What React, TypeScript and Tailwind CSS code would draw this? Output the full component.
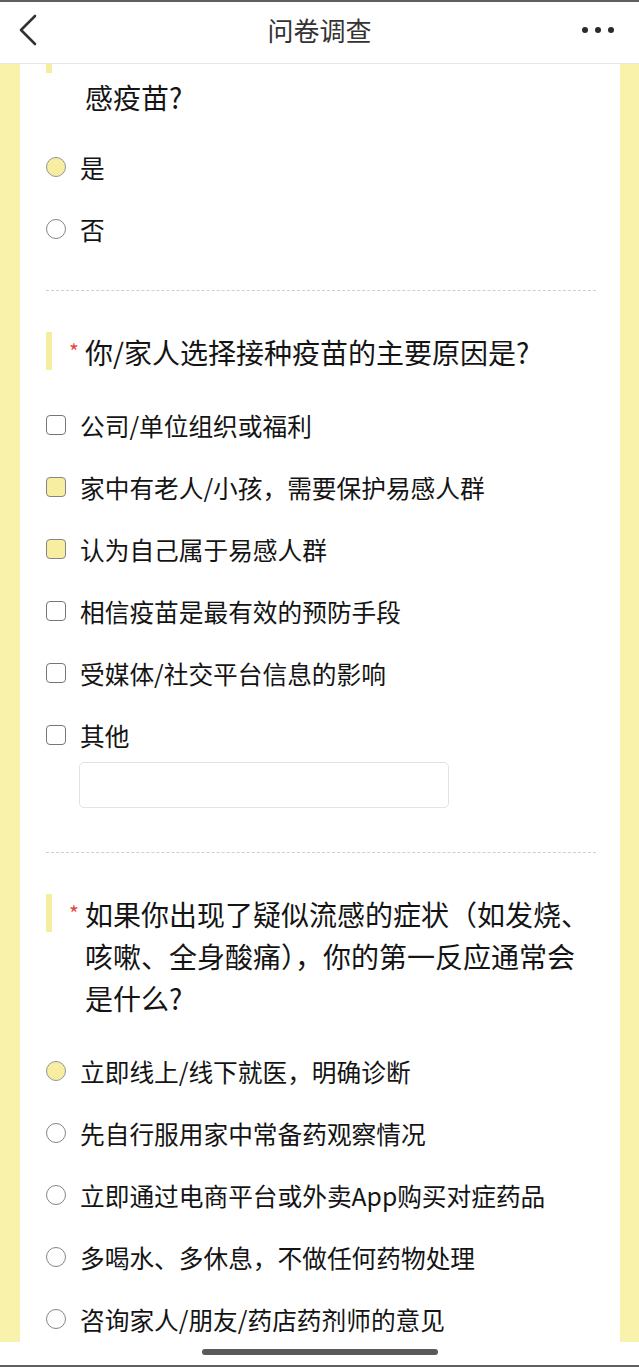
import React from "react";

const FONT = "font-['Noto_Sans_CJK_SC','Noto_Sans',sans-serif]";

function Radio({ checked }: { checked?: boolean }) {
  return (
    <span
      className={
        "w-[20px] h-[20px] rounded-full border-[1.2px] shrink-0 " +
        (checked ? "bg-[#f7eea2] border-[#959595]" : "bg-white border-[#858585]")
      }
    />
  );
}

function Check({ checked }: { checked?: boolean }) {
  return (
    <span
      className={
        "w-[20px] h-[20px] rounded-[4px] border-[1.5px] shrink-0 " +
        (checked ? "bg-[#f7eea2] border-[#858585]" : "bg-white border-[#767676]")
      }
    />
  );
}

function Title({ children }: { children: React.ReactNode }) {
  return (
    <div className="flex items-start">
      <span className="w-[6px] h-[38px] mt-[1px] bg-[#f6ee9f] shrink-0" />
      <span className="ml-[17px] w-[16px] shrink-0 text-[21px] leading-[40px] text-[#e5463f]">*</span>
      <div className="flex-1 text-[28px] leading-[42px] text-[#141414]">{children}</div>
    </div>
  );
}

function Option({ label, checked, box }: { label: string; checked?: boolean; box?: boolean }) {
  return (
    <div className="flex items-center h-[24px]">
      {box ? <Check checked={checked} /> : <Radio checked={checked} />}
      <span className="ml-[14px] text-[24.7px] leading-[24px] text-[#141414] whitespace-nowrap">{label}</span>
    </div>
  );
}

function Dashed({ mt }: { mt: string }) {
  return <div className={mt + " border-t border-dashed border-[#cfcfcf]"} />;
}

export default function App() {
  return (
    <div className={"w-[639px] h-[1367px] flex flex-col bg-white overflow-hidden " + FONT}>
      <div className="h-[2px] bg-[#5f5f5f] shrink-0" />
      <header className="h-[62px] shrink-0 border-b border-[#e6e6e6] grid grid-cols-[1fr_auto_1fr] items-center bg-white pb-[6px]">
        <div className="pl-[18px] flex items-center">
          <svg width="20" height="32" viewBox="0 0 20 32" fill="none">
            <path d="M17 2 L3 16 L17 30" stroke="#333" strokeWidth="2.6" strokeLinecap="round" strokeLinejoin="round" />
          </svg>
        </div>
        <div className="text-[26px] leading-[30px] text-[#333]">问卷调查</div>
        <div className="flex justify-end pr-[25px] gap-[7px] items-center">
          <span className="w-[6px] h-[6px] rounded-full bg-[#2a2a2a]" />
          <span className="w-[6px] h-[6px] rounded-full bg-[#2a2a2a]" />
          <span className="w-[6px] h-[6px] rounded-full bg-[#2a2a2a]" />
        </div>
      </header>

      <div className="h-[1278px] shrink-0 flex">
        <div className="w-[20px] bg-[#f9f2ab] shrink-0" />
        <div className="flex-1 overflow-hidden bg-white pl-[26px] pr-[24px]">
          <div className="mt-[-30px]">
            {/* Q1 */}
            <Title>
              <span className="block relative top-[-12px]">今年你/家人是否已经接种或计划接种流</span>
              <span className="block">感疫苗?</span>
            </Title>
            <div className="mt-[37px] flex flex-col gap-[38px]">
              <Option label="是" checked />
              <Option label="否" />
            </div>
            <Dashed mt="mt-[49px]" />

            {/* Q2 */}
            <div className="mt-[40px]">
              <Title>你/家人选择接种疫苗的主要原因是?</Title>
            </div>
            <div className="mt-[40px] flex flex-col gap-[38px]">
              <Option box label="公司/单位组织或福利" />
              <Option box checked label="家中有老人/小孩，需要保护易感人群" />
              <Option box checked label="认为自己属于易感人群" />
              <Option box label="相信疫苗是最有效的预防手段" />
              <Option box label="受媒体/社交平台信息的影响" />
              <Option box label="其他" />
            </div>
            <div className="mt-[15px] ml-[33px] w-[370px] h-[46px] border border-[#e3e3e3] rounded-[5px]" />
            <Dashed mt="mt-[44px]" />

            {/* Q3 */}
            <div className="mt-[40px]">
              <Title>如果你出现了疑似流感的症状（如发烧、咳嗽、全身酸痛），你的第一反应通常会是什么?</Title>
            </div>
            <div className="mt-[40px] flex flex-col gap-[38px]">
              <Option checked label="立即线上/线下就医，明确诊断" />
              <Option label="先自行服用家中常备药观察情况" />
              <Option label="立即通过电商平台或外卖App购买对症药品" />
              <Option label="多喝水、多休息，不做任何药物处理" />
              <Option label="咨询家人/朋友/药店药剂师的意见" />
            </div>
          </div>
        </div>
        <div className="w-[19px] bg-[#f9f2ab] shrink-0" />
      </div>

      <div className="h-[23px] shrink-0 flex justify-center pt-[7px] bg-white">
        <div className="w-[236px] h-[6px] rounded-full bg-[#5a5a5a]" />
      </div>
      <div className="h-[2px] bg-[#5f5f5f] shrink-0" />
    </div>
  );
}
